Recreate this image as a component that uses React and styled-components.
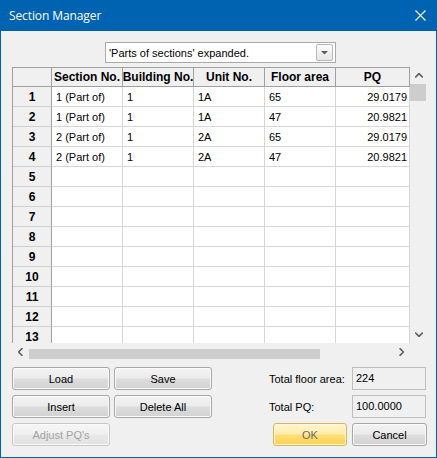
import React from 'react';
import styled, { createGlobalStyle, css } from 'styled-components';

const Global = createGlobalStyle`
  html, body { margin: 0; padding: 0; background: #ffffff; }
  body { font-family: "Liberation Sans", Arial, sans-serif; overflow: hidden; }
  * { box-sizing: border-box; }
`;

const Window = styled.div`
  width: 437px;
  height: 458px;
  border: 1px solid #0063b1;
  border-top: none;
  background: #f0f0f0;
  display: flex;
  flex-direction: column;
`;

const TitleBar = styled.div`
  height: 31px;
  margin: 0 -1px;
  background: #0063b1;
  color: #ffffff;
  display: flex;
  align-items: center;
  justify-content: space-between;
  padding: 0 11px 0 9px;
`;

const Title = styled.span`
  font-family: "Open Sans", "Noto Sans", sans-serif;
  font-size: 12px;
  letter-spacing: -0.1px;
  margin-top: -1px;
`;

const Body = styled.div`
  display: flex;
  flex-direction: column;
  padding-left: 11px;
`;

const Combo = styled.div`
  margin: 11px 0 0 93px;
  width: 231px;
  height: 21px;
  background: #ffffff;
  border: 1px solid #a9a9a9;
  display: flex;
  align-items: center;
  justify-content: space-between;
  padding: 0 2px 0 3px;
  font-size: 11px;
  color: #000;
`;

const ComboButton = styled.div`
  width: 17px;
  height: 17px;
  border: 1px solid #b8b8b8;
  border-radius: 2px;
  background: linear-gradient(#fbfbfb, #e6e6e6);
  display: flex;
  align-items: center;
  justify-content: center;
`;

const GridFrame = styled.div`
  margin-top: 4px;
  width: 415px;
  height: 292px;
  display: grid;
  grid-template-columns: 398px 17px;
  grid-template-rows: 276px 16px;
`;

const Cells = styled.div`
  overflow: hidden;
  background: #ffffff;
  border-top: 1px solid #a0a0a0;
  border-left: 1px solid #a0a0a0;
  display: flex;
  flex-direction: column;
`;

const Row = styled.div`
  display: flex;
  flex: none;
  height: ${p => (p.$header ? 19 : 20)}px;
`;

const Cell = styled.div`
  flex: none;
  width: ${p => p.$w}px;
  height: 100%;
  display: flex;
  align-items: center;
  white-space: nowrap;
  overflow: hidden;
  font-size: 11px;
  color: #000;
  padding: 0 3px 0 4px;
  border-right: 1px solid #d6d6d6;
  border-bottom: 1px solid #d6d6d6;
  justify-content: ${p => (p.$right ? 'flex-end' : 'flex-start')};
  ${p => p.$right && css`padding-right: 2px;`}
  ${p =>
    p.$head &&
    css`
      background: #f0f0f0;
      font-weight: bold;
      font-size: 12px;
      justify-content: center;
      padding: 0;
      border-right-color: #a0a0a0;
      border-bottom-color: #a0a0a0;
    `}
  ${p =>
    p.$rowHead &&
    css`
      background: #f0f0f0;
      font-weight: bold;
      font-size: 12px;
      justify-content: center;
      padding: 0;
      border-right-color: #a0a0a0;
      border-bottom-color: #d0d0d0;
    `}
`;

const VScroll = styled.div`
  background: #f0f0f0;
  display: flex;
  flex-direction: column;
`;

const HScroll = styled.div`
  background: #f0f0f0;
  display: flex;
  align-items: stretch;
`;

const ArrowBtn = styled.div`
  flex: none;
  width: 17px;
  height: 17px;
  display: flex;
  align-items: center;
  justify-content: center;
  ${p => p.$h && css`height: 16px; padding-top: 2px;`}
`;

const VThumb = styled.div`
  flex: none;
  height: 17px;
  margin: 0 1px 0 0;
  background: #cdcdcd;
`;

const HThumb = styled.div`
  flex: none;
  width: 291px;
  margin: 6px 0 0 0;
  height: 10px;
  background: #cdcdcd;
`;

const Track = styled.div`
  flex: 1;
`;

const Corner = styled.div`
  background: #f0f0f0;
`;

const Bottom = styled.div`
  margin-top: 8px;
  width: 415px;
  display: flex;
  justify-content: space-between;
`;

const LeftButtons = styled.div`
  display: grid;
  grid-template-columns: 98px 98px;
  grid-auto-rows: 23px;
  column-gap: 4px;
  row-gap: 5px;
`;

const RightBlock = styled.div`
  display: grid;
  grid-template-columns: 78px 75px;
  grid-auto-rows: 23px;
  column-gap: 5px;
  row-gap: 5px;
`;

const Button = styled.button`
  font-family: "Liberation Sans", Arial, sans-serif;
  font-size: 11px;
  color: #000;
  padding: 0;
  height: 23px;
  border-radius: 3px;
  border: 1px solid #a7a7a7;
  box-shadow: inset 0 0 0 1px #fbfbfb;
  background: linear-gradient(#f3f3f3 0%, #ebebeb 48%, #dddddd 52%, #d2d2d2 100%);
  cursor: default;
  ${p =>
    p.disabled &&
    css`
      color: #a3a3a3;
      border-color: #c8c8c8;
      background: linear-gradient(#f6f6f6 0%, #f0f0f0 48%, #e8e8e8 52%, #e2e2e2 100%);
    `}
  ${p =>
    p.$default &&
    css`
      color: #6a6a6a;
      border-color: #d9b65a;
      box-shadow: inset 0 0 0 1px #fff8dc;
      background: linear-gradient(#fff6d4 0%, #ffeca8 48%, #ffdf7a 52%, #fcd252 100%);
    `}
  ${p => p.$w && css`width: ${p.$w}px; justify-self: end;`}
`;

const Label = styled.span`
  font-size: 11px;
  color: #000;
  display: flex;
  align-items: center;
`;

const ReadBox = styled.div`
  width: 74px;
  border: 1px solid #bfbfbf;
  background: #f0f0f0;
  font-size: 11px;
  color: #000;
  padding: 4px 0 0 3px;
`;

const Chevron = ({ dir }) => {
  const pts = {
    up: '0,4 3.5,0.5 7,4',
    down: '0,0.5 3.5,4 7,0.5',
    left: '4,0 0.5,3.5 4,7',
    right: '0.5,0 4,3.5 0.5,7',
  }[dir];
  const vertical = dir === 'up' || dir === 'down';
  return (
    <svg width={vertical ? 8 : 5} height={vertical ? 5 : 8} viewBox={vertical ? '0 0 7 4.5' : '0 0 4.5 7'}>
      <polyline points={pts} fill="none" stroke="#606060" strokeWidth="1.5" />
    </svg>
  );
};

const columns = [
  { key: 'sec', title: 'Section No.', w: 71 },
  { key: 'bld', title: 'Building No.', w: 71 },
  { key: 'unit', title: 'Unit No.', w: 71 },
  { key: 'area', title: 'Floor area', w: 71 },
  { key: 'pq', title: 'PQ', w: 74, right: true },
];

const data = [
  { sec: '1 (Part of)', bld: '1', unit: '1A', area: '65', pq: '29.0179' },
  { sec: '1 (Part of)', bld: '1', unit: '1A', area: '47', pq: '20.9821' },
  { sec: '2 (Part of)', bld: '1', unit: '2A', area: '65', pq: '29.0179' },
  { sec: '2 (Part of)', bld: '1', unit: '2A', area: '47', pq: '20.9821' },
];

export default function App() {
  const rows = Array.from({ length: 13 }, (_, i) => data[i] || {});
  return (
    <>
      <Global />
      <Window>
        <TitleBar>
          <Title>Section Manager</Title>
          <svg width="11" height="11" viewBox="0 0 11 11">
            <path d="M0.5 0.5 L10.5 10.5 M10.5 0.5 L0.5 10.5" stroke="#ffffff" strokeWidth="1.1" />
          </svg>
        </TitleBar>
        <Body>
          <Combo>
            <span>'Parts of sections' expanded.</span>
            <ComboButton>
              <svg width="7" height="4" viewBox="0 0 7 4">
                <path d="M0 0 L7 0 L3.5 3.5 Z" fill="#5a5a5a" />
              </svg>
            </ComboButton>
          </Combo>
          <GridFrame>
            <Cells>
              <Row $header>
                <Cell $w={39} $head />
                {columns.map(c => (
                  <Cell key={c.key} $w={c.w} $head>
                    {c.title}
                  </Cell>
                ))}
              </Row>
              {rows.map((r, i) => (
                <Row key={i}>
                  <Cell $w={39} $rowHead>
                    {i + 1}
                  </Cell>
                  {columns.map(c => (
                    <Cell key={c.key} $w={c.w} $right={c.right}>
                      {r[c.key] || ''}
                    </Cell>
                  ))}
                </Row>
              ))}
            </Cells>
            <VScroll>
              <ArrowBtn>
                <Chevron dir="up" />
              </ArrowBtn>
              <VThumb />
              <Track />
              <ArrowBtn>
                <Chevron dir="down" />
              </ArrowBtn>
            </VScroll>
            <HScroll>
              <ArrowBtn $h>
                <Chevron dir="left" />
              </ArrowBtn>
              <HThumb />
              <Track />
              <ArrowBtn $h>
                <Chevron dir="right" />
              </ArrowBtn>
            </HScroll>
            <Corner />
          </GridFrame>
          <Bottom>
            <LeftButtons>
              <Button>Load</Button>
              <Button>Save</Button>
              <Button>Insert</Button>
              <Button>Delete All</Button>
              <Button disabled>Adjust PQ's</Button>
            </LeftButtons>
            <RightBlock>
              <Label>Total floor area:</Label>
              <ReadBox>224</ReadBox>
              <Label>Total PQ:</Label>
              <ReadBox>100.0000</ReadBox>
              <Button $default $w={74}>OK</Button>
              <Button>Cancel</Button>
            </RightBlock>
          </Bottom>
        </Body>
      </Window>
    </>
  );
}
